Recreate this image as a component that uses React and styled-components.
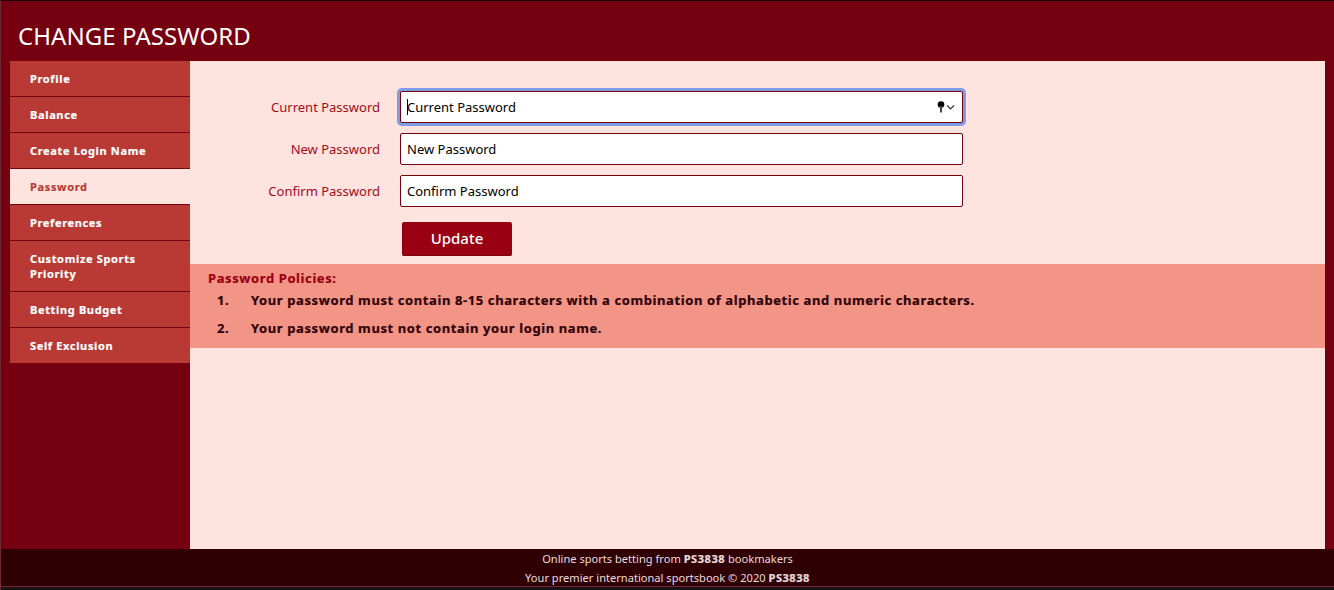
import React from 'react';
import styled, { createGlobalStyle } from 'styled-components';

const GlobalStyle = createGlobalStyle`
    html, body { margin: 0; padding: 0; height: 100%; background: #2f0004; }
    body { font-family: "Noto Sans", "Open Sans", sans-serif; overflow: hidden; }
    * { box-sizing: border-box; }
`;

const Page = styled.div`
    width: 1334px;
    height: 590px;
    display: flex;
    flex-direction: column;
    border-top: 1px solid #1c0003;
    border-left: 1px solid #6d2a33;
    background: #75000f;
`;

const Title = styled.h1`
    height: 60px;
    margin: 0;
    padding: 19px 0 0 17px;
    color: #fff;
    font-size: 24px;
    line-height: 32px;
    font-weight: 400;
    letter-spacing: 0.06px;
`;

const Body = styled.div`
    height: 488px;
    display: flex;
    padding: 0 9px;
`;

const Sidebar = styled.nav`
    width: 180px;
    flex: none;
`;

const MenuItem = styled.div`
    min-height: 36px;
    padding: 10px 20px;
    border-bottom: 1px solid #75000f;
    background: ${(props) => (props.$active ? '#ffe3de' : '#b93a35')};
    color: ${(props) => (props.$active ? '#b93a35' : '#fff')};
    font-size: 11px;
    line-height: 15px;
    font-weight: 700;
    letter-spacing: 0.65px;
    -webkit-text-stroke: 0.2px currentColor;
`;

const Content = styled.main`
    flex: 1;
    background: #ffe3de;
    padding-top: 30px;
`;

const Field = styled.div`
    display: flex;
    align-items: center;
    height: 32px;
    margin-bottom: 10px;
`;

const Label = styled.label`
    width: 190px;
    flex: none;
    text-align: right;
    color: #a50a1b;
    font-size: 13px;
`;

const InputBox = styled.div`
    position: relative;
    width: 563px;
    height: 32px;
    margin-left: 20px;
    border: 1px solid #75000f;
    border-radius: 2px;
    background: #fff;
    box-shadow: ${(props) => (props.$focused ? '0 0 0 3px #7f9be6' : 'none')};
`;

const Input = styled.input`
    width: 100%;
    height: 100%;
    padding: 0 40px 0 6px;
    border: none;
    outline: none;
    background: transparent;
    color: #000;
    font-family: inherit;
    font-size: 13px;
`;

const Caret = styled.span`
    position: absolute;
    left: 6px;
    top: 7px;
    width: 1px;
    height: 16px;
    background: #000;
`;

const KeyIcon = styled.svg`
    position: absolute;
    right: 7px;
    top: 8px;
`;

const UpdateButton = styled.button`
    display: block;
    width: 110px;
    height: 34px;
    margin: 15px 0 8px 212px;
    padding: 0 0 2px;
    border: none;
    border-bottom: 1px solid #7c0010;
    border-radius: 2px;
    background: #990012;
    color: #fff;
    font-family: inherit;
    font-size: 15px;
    font-weight: 500;
`;

const Policies = styled.section`
    height: 84px;
    padding: 4px 0 0 18px;
    background: #f29486;
`;

const PolicyTitle = styled.div`
    color: #990012;
    font-size: 13px;
    line-height: 21px;
    font-weight: 700;
    letter-spacing: 0.6px;
    -webkit-text-stroke: 0.2px currentColor;
`;

const PolicyRow = styled.div`
    display: flex;
    height: 28px;
    padding-left: 9px;
    color: #2f0004;
    font-size: 13px;
    line-height: 22px;
    font-weight: 700;
    letter-spacing: 0.6px;
    -webkit-text-stroke: 0.2px currentColor;
`;

const PolicyNumber = styled.span`
    width: 34px;
    flex: none;
`;

const Footer = styled.footer`
    height: 38px;
    background: #2f0004;
    border-bottom: 1px solid #6d2a33;
    color: #e8dcdc;
    font-size: 11.1px;
    line-height: 19px;
    text-align: center;
`;

const Brand = styled.b`
    letter-spacing: 0.5px;
    -webkit-text-stroke: 0.2px currentColor;
`;

const BottomEdge = styled.div`
    flex: 1;
    background: #1b1216;
`;

const menu = ['Profile', 'Balance', 'Create Login Name', 'Password', 'Preferences', 'Customize Sports Priority', 'Betting Budget', 'Self Exclusion'];

const fields = [
    { name: 'Current Password', focused: true },
    { name: 'New Password' },
    { name: 'Confirm Password' },
];

const App = () => {
    return (
        <Page>
            <GlobalStyle />
            <Title>CHANGE PASSWORD</Title>
            <Body>
                <Sidebar>
                    {menu.map((item) => (
                        <MenuItem key={item} $active={item === 'Password'}>{item}</MenuItem>
                    ))}
                </Sidebar>
                <Content>
                    {fields.map((field) => (
                        <Field key={field.name}>
                            <Label>{field.name}</Label>
                            <InputBox $focused={field.focused}>
                                <Input readOnly value={field.name} />
                                {field.focused && <Caret />}
                                {field.focused && (
                                    <KeyIcon width="18" height="14" viewBox="0 0 18 14">
                                        <circle cx="4" cy="4.5" r="3.3" fill="#000" />
                                        <rect x="3" y="6" width="2" height="6.5" fill="#444" />
                                        <path d="M10 5.5l3.5 3.5 3.5-3.5" fill="none" stroke="#333" strokeWidth="1.2" />
                                    </KeyIcon>
                                )}
                            </InputBox>
                        </Field>
                    ))}
                    <UpdateButton>Update</UpdateButton>
                    <Policies>
                        <PolicyTitle>Password Policies:</PolicyTitle>
                        <PolicyRow>
                            <PolicyNumber>1.</PolicyNumber>
                            Your password must contain 8-15 characters with a combination of alphabetic and numeric characters.
                        </PolicyRow>
                        <PolicyRow>
                            <PolicyNumber>2.</PolicyNumber>
                            Your password must not contain your login name.
                        </PolicyRow>
                    </Policies>
                </Content>
            </Body>
            <Footer>
                <div>Online sports betting from <Brand>PS3838</Brand> bookmakers</div>
                <div>Your premier international sportsbook © 2020 <Brand>PS3838</Brand></div>
            </Footer>
            <BottomEdge />
        </Page>
    );
};

export default App;
